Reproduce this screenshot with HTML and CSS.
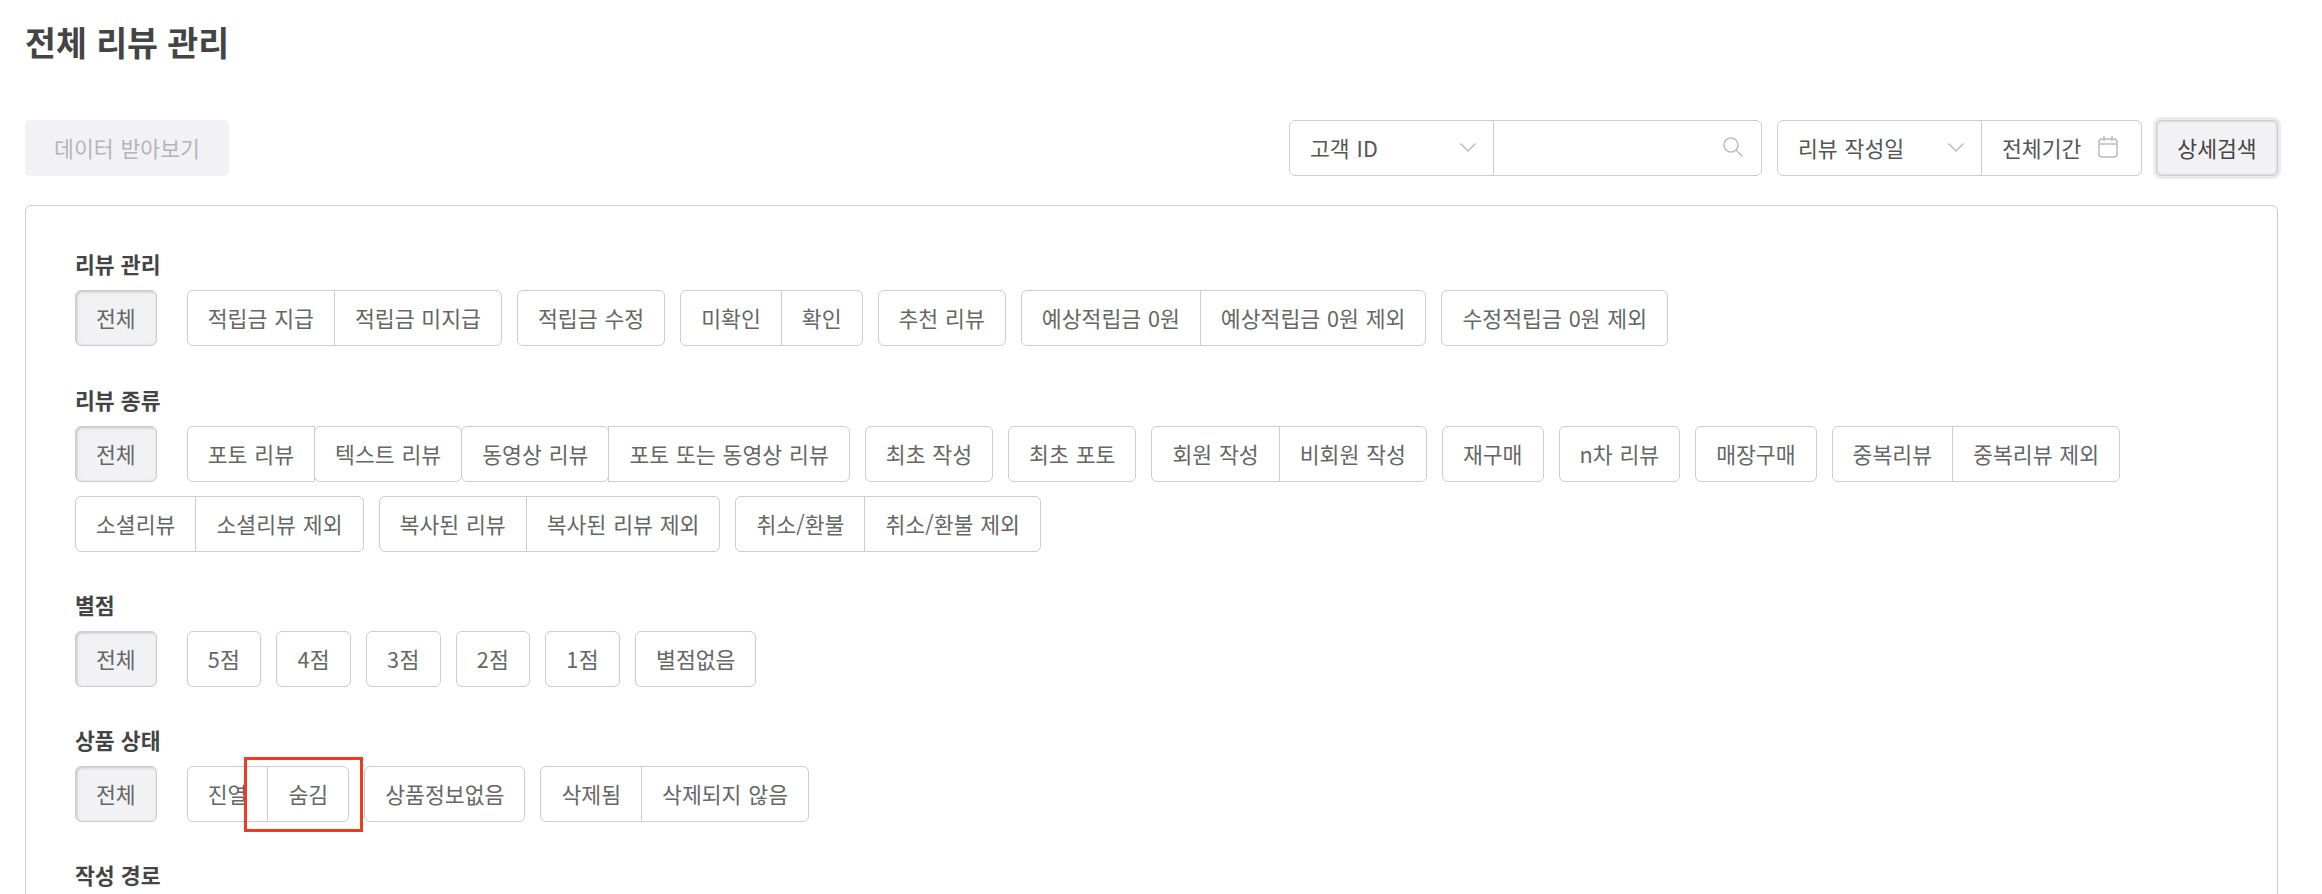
FILE: index.html
```html
<!DOCTYPE html>
<html lang="ko">
<head>
  <meta charset="UTF-8">
  <title>전체 리뷰 관리</title>
  <link rel="stylesheet" href="styles.css">
</head>
<body>

<div class="page">
  <h1>전체 리뷰 관리</h1>

  <div class="toolbar">
    <button class="export-btn">데이터 받아보기</button>
    <div class="search-area">
      <div class="btn-group">
        <div class="select select-id">
          <span>고객 ID</span>
          <svg class="chevron" viewBox="0 0 16 9"><polyline points="0.5,0.5 8,8 15.5,0.5"/></svg>
        </div>
        <div class="search-input">
          <svg class="search-icon" viewBox="0 0 20 20"><circle cx="8" cy="8" r="7"/><line x1="13" y1="13" x2="19.5" y2="19.5"/></svg>
        </div>
      </div>
      <div class="btn-group">
        <div class="select select-date">
          <span>리뷰 작성일</span>
          <svg class="chevron" viewBox="0 0 16 9"><polyline points="0.5,0.5 8,8 15.5,0.5"/></svg>
        </div>
        <div class="date-range">
          <span>전체기간</span>
          <svg class="cal-icon" viewBox="0 0 20 22"><rect x="1" y="3" width="18" height="18" rx="3"/><line x1="1" y1="8" x2="19" y2="8"/><line x1="6" y1="0" x2="6" y2="5"/><line x1="14" y1="0" x2="14" y2="5"/></svg>
        </div>
      </div>
      <button class="detail-btn">상세검색</button>
    </div>
  </div>

  <div class="panel">
    <section class="filter">
      <h2>리뷰 관리</h2>
      <div class="options">
        <button class="opt active">전체</button>
        <div class="btn-group"><button class="opt">적립금 지급</button><button class="opt">적립금 미지급</button></div>
        <button class="opt">적립금 수정</button>
        <div class="btn-group"><button class="opt">미확인</button><button class="opt">확인</button></div>
        <button class="opt">추천 리뷰</button>
        <div class="btn-group"><button class="opt">예상적립금 0원</button><button class="opt">예상적립금 0원 제외</button></div>
        <button class="opt">수정적립금 0원 제외</button>
      </div>
    </section>

    <section class="filter">
      <h2>리뷰 종류</h2>
      <div class="options">
        <button class="opt active">전체</button>
        <div class="btn-group"><button class="opt">포토 리뷰</button><button class="opt">텍스트 리뷰</button><button class="opt">동영상 리뷰</button><button class="opt">포토 또는 동영상 리뷰</button></div>
        <button class="opt">최초 작성</button>
        <button class="opt">최초 포토</button>
        <div class="btn-group"><button class="opt">회원 작성</button><button class="opt">비회원 작성</button></div>
        <button class="opt">재구매</button>
        <button class="opt">n차 리뷰</button>
        <button class="opt">매장구매</button>
        <div class="btn-group"><button class="opt">중복리뷰</button><button class="opt">중복리뷰 제외</button></div>
        <div class="btn-group"><button class="opt">소셜리뷰</button><button class="opt">소셜리뷰 제외</button></div>
        <div class="btn-group"><button class="opt">복사된 리뷰</button><button class="opt">복사된 리뷰 제외</button></div>
        <div class="btn-group"><button class="opt">취소/환불</button><button class="opt">취소/환불 제외</button></div>
      </div>
    </section>

    <section class="filter">
      <h2>별점</h2>
      <div class="options">
        <button class="opt active">전체</button>
        <button class="opt score">5점</button>
        <button class="opt score">4점</button>
        <button class="opt score">3점</button>
        <button class="opt score">2점</button>
        <button class="opt score">1점</button>
        <button class="opt">별점없음</button>
      </div>
    </section>

    <section class="filter">
      <h2>상품 상태</h2>
      <div class="options">
        <button class="opt active">전체</button>
        <div class="btn-group highlight-host"><button class="opt">진열</button><button class="opt">숨김</button><span class="highlight"></span></div>
        <button class="opt">상품정보없음</button>
        <div class="btn-group"><button class="opt">삭제됨</button><button class="opt">삭제되지 않음</button></div>
      </div>
    </section>

    <section class="filter">
      <h2>작성 경로</h2>
    </section>
  </div>
</div>

</body>
</html>
```

FILE: styles.css
```css
html, body {
  height: 100%;
  overflow: hidden;
}
body {
  margin: 0;
  background-color: #fff;
  color: #666;
  font-family: "Noto Sans CJK KR", "Noto Sans", sans-serif;
  font-size: 21.6px;
  word-spacing: 0.8px;
}
button {
  font: inherit;
  word-spacing: inherit;
  color: inherit;
  cursor: pointer;
}
.page {
  padding: 0 44px 0 25px;
}
h1 {
  margin: 0;
  padding-top: 19px;
  height: 120px;
  box-sizing: border-box;
  font-size: 33.6px;
  line-height: 46px;
  font-weight: 700;
  color: #444;
  word-spacing: 0;
}
.toolbar {
  display: flex;
  justify-content: space-between;
  height: 56px;
  margin-bottom: 29px;
}
.export-btn {
  width: 204px;
  padding: 0 0 2px;
  border: none;
  border-radius: 5px;
  background-color: #f2f2f4;
  color: #b5b5b8;
}
.search-area {
  display: flex;
  gap: 15px;
}
.btn-group {
  display: flex;
  position: relative;
}
.btn-group > * {
  margin-left: -1px;
  border-radius: 0;
}
.btn-group > *:first-child {
  margin-left: 0;
  border-radius: 6px 0 0 6px;
}
.btn-group > *:last-of-type {
  border-radius: 0 6px 6px 0;
}
.select, .search-input, .date-range {
  box-sizing: border-box;
  display: flex;
  align-items: center;
  justify-content: space-between;
  height: 56px;
  padding: 0 17px 2px 20px;
  border: 1px solid #ccc;
  background-color: #fff;
  color: #555;
}
.select-id {
  width: 205px;
}
.search-input {
  width: 269px;
  justify-content: flex-end;
  padding-right: 18px;
}
.select-date {
  width: 205px;
}
.date-range {
  width: 161px;
  padding: 0 23px 2px 20px;
}
.chevron {
  width: 16px;
  height: 9px;
  fill: none;
  stroke: #bbb;
  stroke-width: 1.4;
}
.search-icon {
  width: 20px;
  height: 20px;
  fill: none;
  stroke: #bbb;
  stroke-width: 1.5;
}
.cal-icon {
  width: 20px;
  height: 22px;
  fill: none;
  stroke: #bbb;
  stroke-width: 1.5;
}
.detail-btn {
  box-sizing: border-box;
  width: 122px;
  height: 56px;
  margin-left: -1px;
  padding: 0 0 2px;
  border: 1px solid #ccc;
  border-radius: 5px;
  background-color: #f2f2f4;
  color: #444;
  box-shadow: 0 0 0 3px #ececee, inset 0 0 3px rgba(0,0,0,0.18);
}
.panel {
  height: 1200px;
  box-sizing: border-box;
  padding: 43px 49px;
  border: 1px solid #ccc;
  border-radius: 6px;
}
.filter {
  margin-bottom: 38px;
}
.filter:first-child {
  margin-bottom: 39px;
}
h2 {
  margin: 0 0 11px;
  font-size: 21.6px;
  line-height: 30px;
  font-weight: 700;
  color: #444;
  word-spacing: 0;
}
.options {
  display: flex;
  flex-wrap: wrap;
  gap: 14px 15px;
}
.opt {
  box-sizing: border-box;
  height: 56px;
  padding: 0 20px 2px;
  border: 1px solid #ccc;
  border-radius: 6px;
  background-color: #fff;
  white-space: nowrap;
}
.opt.score {
  letter-spacing: 0.4px;
}
.opt.active {
  margin-right: 15px;
  background-color: #f2f2f4;
  box-shadow: inset 1px 1px 3px rgba(0,0,0,0.2);
}
.highlight {
  position: absolute;
  left: 57px;
  top: -9px;
  width: 119px;
  height: 75px;
  box-sizing: border-box;
  border: 3px solid #ee3b22;
  pointer-events: none;
  margin: 0;
}
.btn-group > .highlight:last-of-type {
  border-radius: 0;
}
```
